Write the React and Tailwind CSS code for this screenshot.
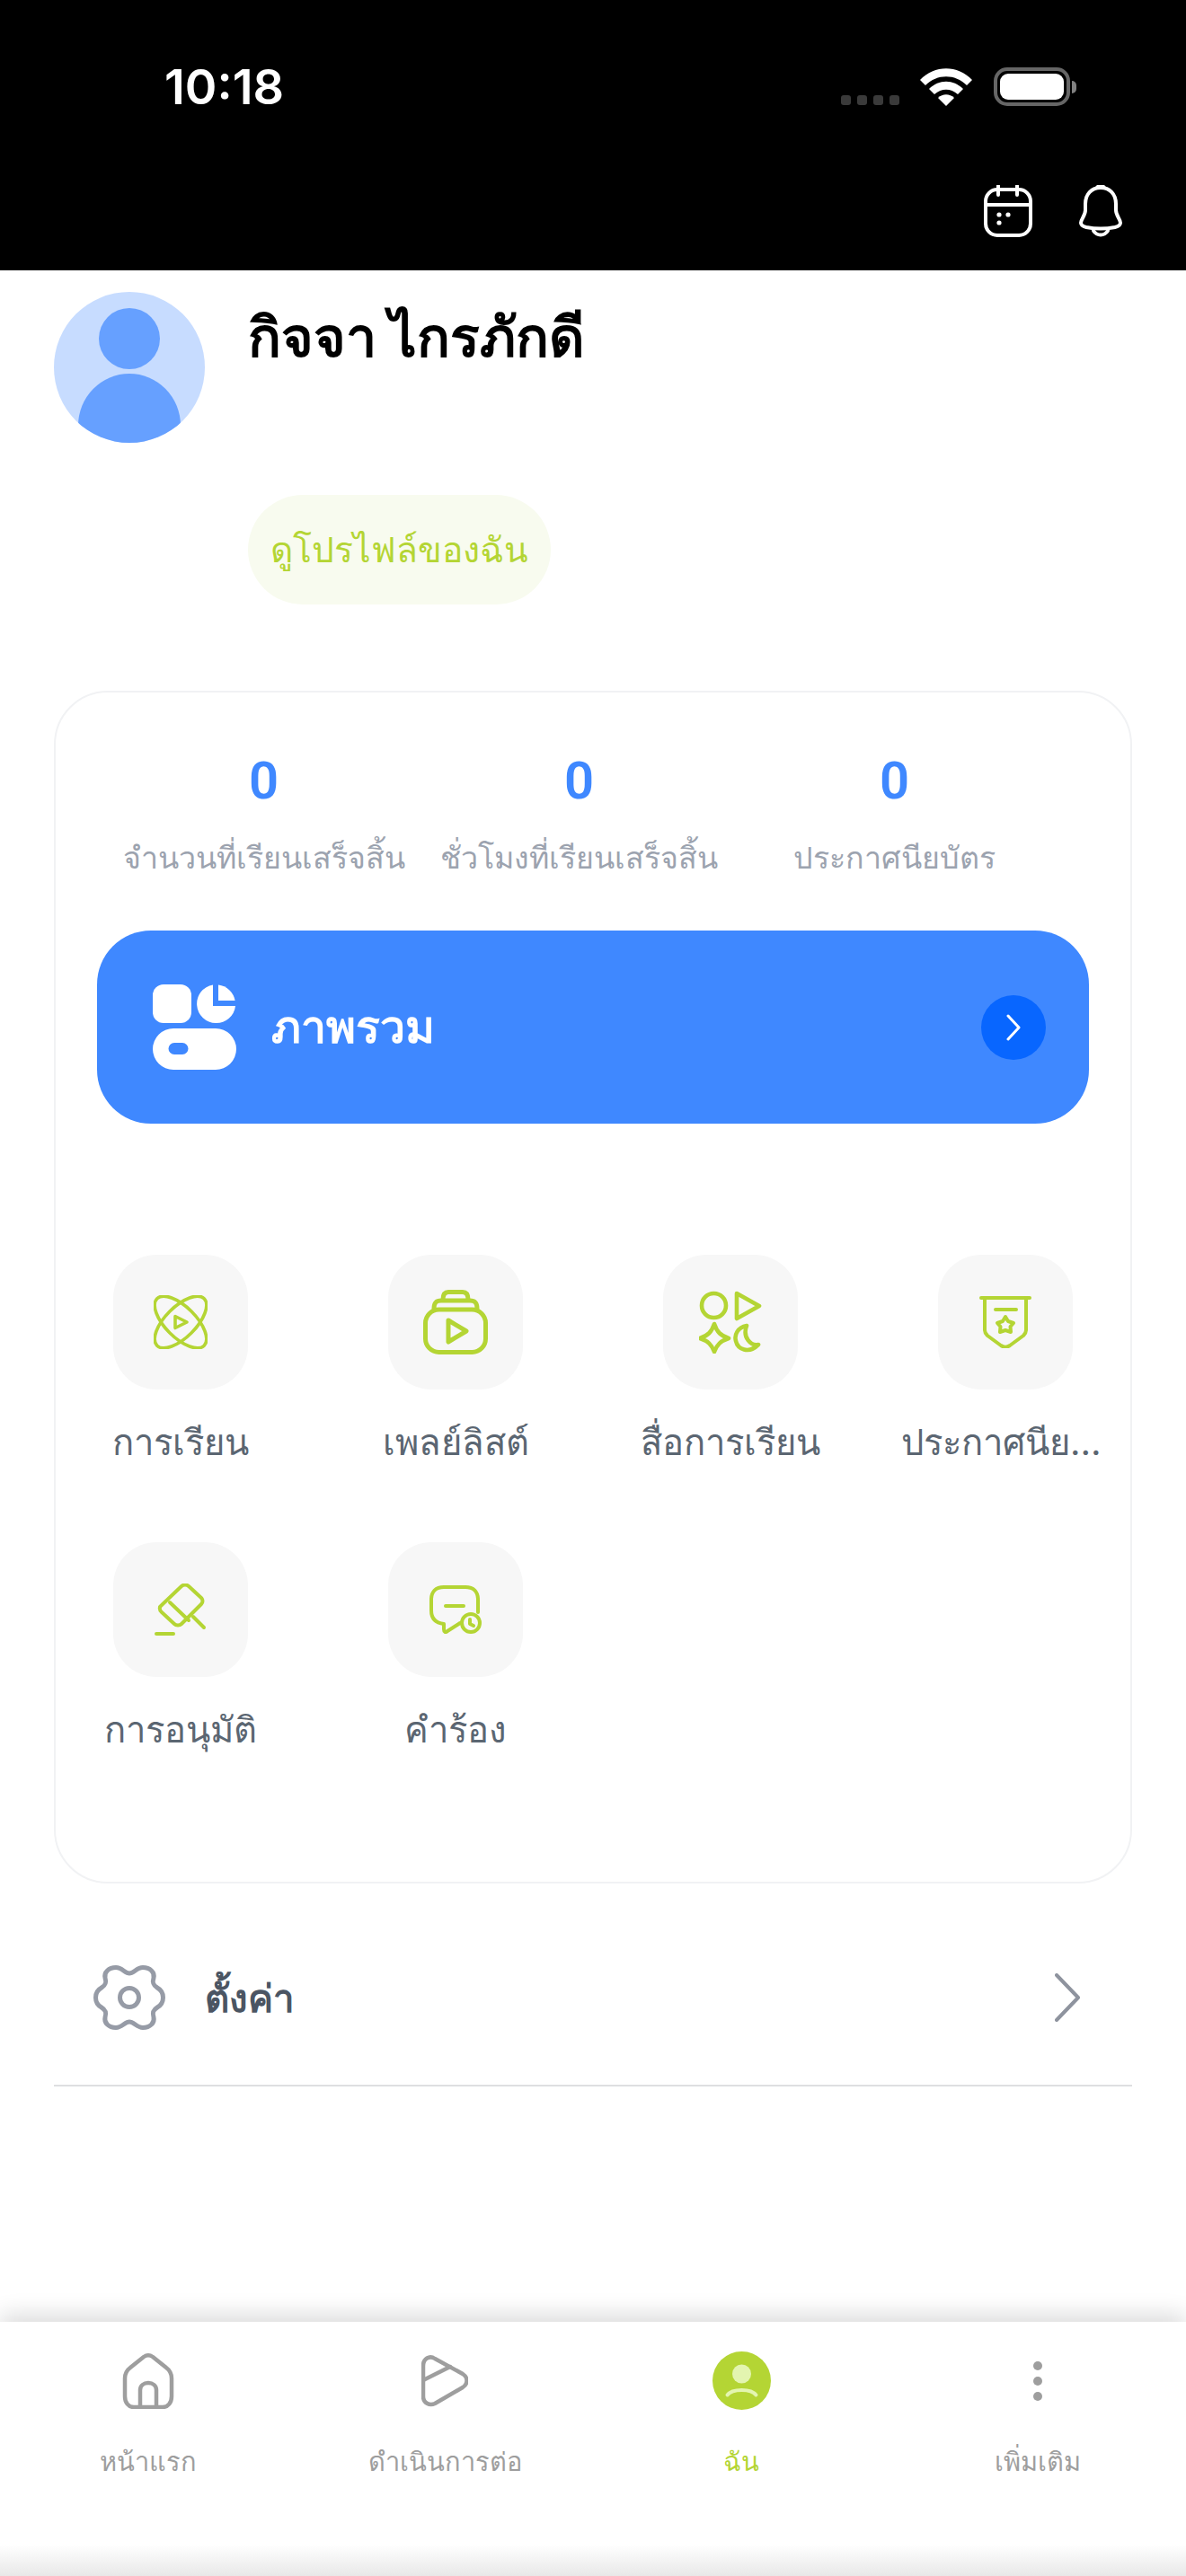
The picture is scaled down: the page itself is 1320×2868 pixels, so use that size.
const GREEN = "#B4D534";

function Wifi() {
  return (
    <svg width="58" height="42" viewBox="0 0 58 42" fill="white">
      <path d="M0 13 C16 -4 42 -4 58 13 L52 19 C39 6 19 6 6 19 Z" />
      <path d="M10 23 C21 12 37 12 48 23 L42 29 C34 22 24 22 16 29 Z" />
      <path d="M20 33 C25 28 33 28 38 33 L29 42 Z" />
    </svg>
  );
}

function Battery() {
  return (
    <div className="flex items-center gap-[2px]">
      <div className="w-[85px] h-[43px] rounded-[15px] border-[4px] border-[#666666] p-[3px]">
        <div className="w-full h-full rounded-[9px] bg-white" />
      </div>
      <div className="w-[5px] h-[14px] rounded-r-full bg-[#808080]" />
    </div>
  );
}

function CalendarIcon() {
  return (
    <svg width="54" height="58" viewBox="0 0 54 58" fill="none" stroke="white" strokeWidth="4" strokeLinecap="round">
      <rect x="2" y="5" width="50" height="51" rx="13" />
      <path d="M2 22 H52 M16 1 V11 M37 1 V11" />
      <circle cx="17" cy="33" r="2.6" fill="white" stroke="none" />
      <circle cx="27" cy="33" r="2.6" fill="white" stroke="none" />
      <circle cx="17" cy="42" r="2.6" fill="white" stroke="none" />
    </svg>
  );
}

function BellIcon() {
  return (
    <svg width="48" height="58" viewBox="0 0 48 58" fill="none" stroke="white" strokeWidth="4" strokeLinecap="round" strokeLinejoin="round">
      <path d="M24 3 C14 3 7 10 7 21 V28 C7 34 2 38 2 42 C2 45 4 46 8 47 C18 49 30 49 40 47 C44 46 46 45 46 42 C46 38 41 34 41 28 V21 C41 10 34 3 24 3 Z" />
      <path d="M16 51 C20 57 28 57 32 51" />
      <path d="M20 3 C21 0.5 27 0.5 28 3" />
    </svg>
  );
}

function Avatar() {
  return (
    <svg width="168" height="168" viewBox="0 0 168 168" className="shrink-0">
      <defs>
        <clipPath id="avatarClip">
          <circle cx="84" cy="84" r="84" />
        </clipPath>
      </defs>
      <circle cx="84" cy="84" r="84" fill="#C7DCFF" />
      <g clipPath="url(#avatarClip)" fill="#66A0FF">
        <circle cx="84" cy="52" r="34" />
        <ellipse cx="84" cy="149" rx="57" ry="58" />
      </g>
    </svg>
  );
}

function OverviewIcon() {
  return (
    <svg width="93" height="95" viewBox="0 0 93 95" fill="white" className="shrink-0">
      <rect x="0" y="0" width="43" height="43" rx="12" />
      <path d="M67 0.4 A21.5 21.5 0 1 0 92 24 H67 Z" />
      <path d="M73 0.4 A21.5 21.5 0 0 1 91.6 18 H73 Z" />
      <path fillRule="evenodd" d="M23 49 H70 A23 23 0 0 1 70 95 H23 A23 23 0 0 1 23 49 Z M24 65 A6.5 6.5 0 0 0 24 78 H33 A6.5 6.5 0 0 0 33 65 Z" />
    </svg>
  );
}

function AtomIcon() {
  return (
    <svg width="60" height="60" viewBox="0 0 60 60" fill="none" stroke={GREEN} strokeWidth="3.6" strokeLinejoin="round">
      <ellipse cx="30" cy="30" rx="37" ry="17" transform="rotate(45 30 30)" />
      <ellipse cx="30" cy="30" rx="37" ry="17" transform="rotate(-45 30 30)" />
      <path d="M24 23.5 L37 30 L24 36.5 Z" />
    </svg>
  );
}

function PlaylistIcon() {
  return (
    <svg width="72" height="72" viewBox="0 0 72 72" fill="none" stroke={GREEN} strokeWidth="5" strokeLinejoin="round" strokeLinecap="round">
      <rect x="2.5" y="22" width="67" height="47.5" rx="15" />
      <path d="M12 21 C12 15 14 12 20 12 H52 C58 12 60 15 60 21" />
      <path d="M22 11 C22 5 24 2.5 28 2.5 H44 C48 2.5 50 5 50 11" />
      <path d="M28 34 L48 46 L28 58 Z" />
    </svg>
  );
}

function MediaIcon() {
  return (
    <svg width="70" height="70" viewBox="0 0 70 70" fill="none" stroke={GREEN} strokeWidth="4.6" strokeLinejoin="round" strokeLinecap="round">
      <circle cx="16.5" cy="16.5" r="13.5" />
      <path d="M42 3 L67 17 L42 31 Z" />
      <path d="M17 37 C20 46 24 50 33 53 C24 56 20 60 17 68 C14 60 10 56 1 53 C10 50 14 46 17 37 Z" />
      <path d="M53 39 C43 41 39 49 41 56 C43 65 55 71 66 60 C58 62 48 52 53 39 Z" />
    </svg>
  );
}

function CertIcon() {
  return (
    <svg width="58" height="58" viewBox="0 0 58 58" fill="none" stroke={GREEN} strokeWidth="4" strokeLinejoin="round" strokeLinecap="round">
      <path d="M2 2 H56" />
      <path d="M6 2 V38 C6 41 7 42 9 44 L24 55 C27 57 31 57 34 55 L49 44 C51 42 52 41 52 38 V2" />
      <path d="M18 15 H41" />
      <path d="M29 23 L32 28 L38 30 L34.5 34 L35 40 L29 38 L23 40 L23.5 34 L20 30 L26 28 Z" />
    </svg>
  );
}

function EraserIcon() {
  return (
    <svg width="58" height="58" viewBox="0 0 58 58" fill="none" stroke={GREEN} strokeWidth="4" strokeLinejoin="round" strokeLinecap="round">
      <path d="M30 3 C32 1 36 1 38 3 L52 16 C54 18 54 21 52 23 L30 45 C28 47 24 47 22 45 L8 32 C5 29 5 26 8 24 Z" />
      <path d="M17 21 L38 41" />
      <path d="M43 37 L55 49" />
      <path d="M2 56 H21" />
    </svg>
  );
}

function RequestIcon() {
  return (
    <svg width="58" height="54" viewBox="0 0 58 54" fill="none" stroke={GREEN} strokeWidth="4" strokeLinejoin="round" strokeLinecap="round">
      <path d="M54 30 V16 C54 7 49 2 40 2 H16 C7 2 2 7 2 16 V28 C2 37 7 42 16 43 V49 C16 52 18 53 20 51 L31 44 L34 42" />
      <path d="M18 23 H38" />
      <circle cx="46" cy="42" r="10" />
      <path d="M45 38 V43 L49 45" />
    </svg>
  );
}

function SettingsIcon() {
  return (
    <svg width="80" height="72" viewBox="0 0 80 72" fill="none" stroke="#969BA6" strokeWidth="5" strokeLinejoin="round" className="shrink-0">
      <path d="M40 9 C35 9 32 2.5 25 2.5 C17 2.5 11.5 8 13 14 C14.5 19 14 22 9 25 C4.5 27.5 2.5 31 2.5 36 C2.5 41 4.5 44.5 9 47 C14 50 14.5 53 13 58 C11.5 64 17 69.5 25 69.5 C32 69.5 35 63 40 63 C45 63 48 69.5 55 69.5 C63 69.5 68.5 64 67 58 C65.5 53 66 50 71 47 C75.5 44.5 77.5 41 77.5 36 C77.5 31 75.5 27.5 71 25 C66 22 65.5 19 67 14 C68.5 8 63 2.5 55 2.5 C48 2.5 45 9 40 9 Z" />
      <circle cx="40" cy="36" r="10.5" />
    </svg>
  );
}

function HomeIcon() {
  return (
    <svg width="58" height="62" viewBox="0 0 58 62" fill="none" stroke="#9E9E9E" strokeWidth="4.5" strokeLinejoin="round" strokeLinecap="round">
      <path d="M24 4 C27 2 31 2 34 4 L49 16 C53 19 55 23 55 28 V48 C55 55 51 60 45 60 H13 C7 60 3 55 3 48 V28 C3 23 5 19 9 16 Z" />
      <path d="M20 60 V41 C20 36 24 33 29 33 C34 33 38 36 38 41 V60" />
    </svg>
  );
}

function ContinueIcon() {
  return (
    <svg width="52" height="58" viewBox="0 0 52 58" fill="none" stroke="#9E9E9E" strokeWidth="4.5" strokeLinejoin="round" strokeLinecap="round">
      <path d="M2 12 C2 4 9 0 15 4 L46 21 C52 25 52 32 46 36 L15 54 C9 57 2 53 2 46 Z" />
      <path d="M2 28 L32 13" />
    </svg>
  );
}

function MeIcon() {
  return (
    <svg width="65" height="65" viewBox="0 0 65 65">
      <circle cx="32.5" cy="32.5" r="32.5" fill={GREEN} />
      <circle cx="32.5" cy="25" r="10.5" fill="#E3F5B0" />
      <path d="M16.5 48.5 C22 41 43 41 48.5 48.5" fill="none" stroke="#E3F5B0" strokeWidth="4" strokeLinecap="round" />
    </svg>
  );
}

function MoreIcon() {
  return (
    <svg width="12" height="46" viewBox="0 0 12 46" fill="#9E9E9E">
      <circle cx="6" cy="6" r="5" />
      <circle cx="6" cy="23" r="5" />
      <circle cx="6" cy="40" r="5" />
    </svg>
  );
}

const stats = ["จำนวนที่เรียนเสร็จสิ้น", "ชั่วโมงที่เรียนเสร็จสิ้น", "ประกาศนียบัตร"];

const menu = [
  { label: "การเรียน", icon: <AtomIcon /> },
  { label: "เพลย์ลิสต์", icon: <PlaylistIcon /> },
  { label: "สื่อการเรียน", icon: <MediaIcon /> },
  { label: "ประกาศนียบัตร", icon: <CertIcon /> },
  { label: "การอนุมัติ", icon: <EraserIcon /> },
  { label: "คำร้อง", icon: <RequestIcon /> },
];

const tabs = [
  { label: "หน้าแรก", icon: <HomeIcon /> },
  { label: "ดำเนินการต่อ", icon: <ContinueIcon /> },
  { label: "ฉัน", icon: <MeIcon />, active: true },
  { label: "เพิ่มเติม", icon: <MoreIcon /> },
];

export default function App() {
  return (
    <div className="flex flex-col w-[1320px] h-[2868px] bg-white overflow-hidden font-['Inter','Noto_Sans',sans-serif]">
      {/* status bar + actions */}
      <header className="h-[301px] bg-black flex flex-col shrink-0">
        <div className="flex items-center justify-between h-[43px] mt-[75px] pl-[183px] pr-[122px]">
          <span className="text-white text-[54px] font-semibold leading-none">10:18</span>
          <div className="flex items-end">
            <div className="flex gap-[7px] mb-[1px] mr-[23px]">
              <div className="w-[11px] h-[11px] rounded-[3px] bg-[#3a3a3a]" />
              <div className="w-[11px] h-[11px] rounded-[3px] bg-[#3a3a3a]" />
              <div className="w-[11px] h-[11px] rounded-[3px] bg-[#3a3a3a]" />
              <div className="w-[11px] h-[11px] rounded-[3px] bg-[#3a3a3a]" />
            </div>
            <Wifi />
            <div className="ml-[24px]">
              <Battery />
            </div>
          </div>
        </div>
        <div className="flex justify-end gap-[52px] mt-[88px] pr-[71px]">
          <CalendarIcon />
          <BellIcon />
        </div>
      </header>

      <main className="flex-1 px-[60px]">
        {/* profile */}
        <section className="flex gap-[48px] pt-[24px]">
          <Avatar />
          <div className="flex flex-col items-start">
            <h1 className="text-[61px] leading-[100px] font-bold text-black">กิจจา ไกรภักดี</h1>
            <button className="mt-[126px] h-[122px] px-[25px] rounded-full bg-[#F8FBEF] text-[39px] font-medium text-[#B4D534]">
              ดูโปรไฟล์ของฉัน
            </button>
          </div>
        </section>

        {/* stats + menu card */}
        <section className="mt-[96px] h-[1328px] rounded-[60px] border-2 border-[#F1F2F4]">
          <div className="grid grid-cols-[repeat(3,351px)] pl-[56px] pt-[62px]">
            {stats.map((label) => (
              <div key={label} className="flex flex-col items-center">
                <span className="font-['Roboto'] text-[58px] leading-[72px] font-semibold text-[#3F88FF]">0</span>
                <span className="mt-[25px] text-[34px] leading-[50px] whitespace-nowrap text-[#9CA3AF]">{label}</span>
              </div>
            ))}
          </div>

          <div className="mx-[46px] mt-[56px] h-[215px] rounded-[60px] bg-[#3F88FF] flex items-center pl-[62px] pr-[48px]">
            <OverviewIcon />
            <span className="ml-[39px] flex-1 text-[50px] font-bold text-white">ภาพรวม</span>
            <div className="w-[72px] h-[72px] rounded-full bg-[#0866FF] flex items-center justify-center">
              <svg width="16" height="30" viewBox="0 0 16 30" fill="none" stroke="white" strokeWidth="3" strokeLinecap="round" strokeLinejoin="round">
                <path d="M2 2 L14 15 L2 28" />
              </svg>
            </div>
          </div>

          <div className="grid grid-cols-4 gap-x-[24px] gap-y-[82px] mt-[146px] -mx-[2px]">
            {menu.map((item) => (
              <div key={item.label} className="flex flex-col items-center">
                <div className="w-[150px] h-[150px] rounded-[48px] bg-[#F7F7F7] flex items-center justify-center">
                  {item.icon}
                </div>
                <span className="mt-[30px] w-[232px] text-center text-[40px] leading-[58px] truncate text-[#5B6672]">
                  {item.label}
                </span>
              </div>
            ))}
          </div>
        </section>

        {/* settings */}
        <div className="mt-[2px] h-[224px] flex items-center pt-[28px] pl-[44px] pr-[58px] border-b-2 border-[#DEDFE1]">
          <SettingsIcon />
          <span className="ml-[44px] flex-1 text-[42px] font-semibold text-[#4B5563]">ตั้งค่า</span>
          <svg width="28" height="54" viewBox="0 0 28 54" fill="none" stroke="#8E939E" strokeWidth="4" strokeLinecap="round" strokeLinejoin="round">
            <path d="M2 2 L26 27 L2 52" />
          </svg>
        </div>
      </main>

      {/* bottom nav */}
      <nav className="relative h-[283px] shrink-0 bg-white shadow-[0_-8px_24px_rgba(0,0,0,0.14)] grid grid-cols-4">
        {tabs.map((tab) => (
          <div key={tab.label} className="flex flex-col items-center">
            <div className="h-[65px] mt-[33px] flex items-center justify-center">{tab.icon}</div>
            <span className={"mt-[35px] text-[29px] leading-[46px] " + (tab.active ? "text-[#B4D534]" : "text-[#9E9E9E]")}>
              {tab.label}
            </span>
          </div>
        ))}
        <div className="absolute bottom-0 inset-x-0 h-[35px] bg-gradient-to-b from-white to-[#E8E8E8]" />
      </nav>
    </div>
  );
}
